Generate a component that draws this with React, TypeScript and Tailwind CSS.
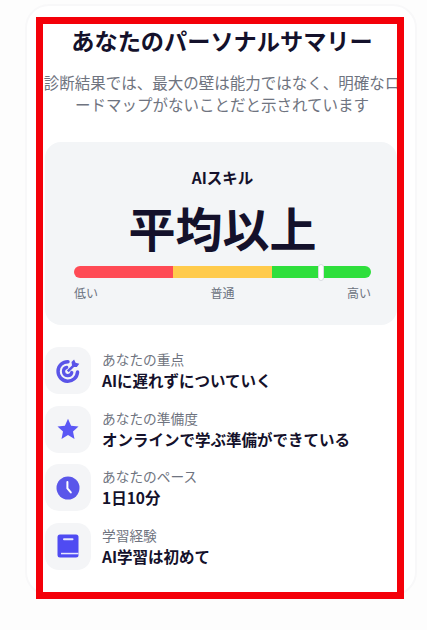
import type { ReactNode } from "react"

function TargetIcon() {
  return (
    <svg viewBox="0 0 24 24" className="h-[26px] w-[26px]" fill="none" stroke="#5a54e8">
      <path d="M12 3.400A9 9 0 1 0 20.800 13" strokeWidth="3.200" strokeLinecap="round" />
      <path d="M10.800 8.600A3.900 3.900 0 1 0 15.500 13.400" strokeWidth="3" strokeLinecap="round" />
      <path d="M11.800 12.400L18.600 5.600" strokeWidth="2.400" />
      <path d="M15.200 3.600L17.600 1.400L19 4.400L22.400 5.400L20.200 8.200L16 8.200Z" fill="#5a54e8" stroke="none" />
    </svg>
  )
}

function StarIcon() {
  return (
    <svg viewBox="0 0 24 24" className="h-[24px] w-[24px]" fill="#5b57f5">
      <path d="M12 1.800l3.100 6.900 7.400.8-5.500 5 1.500 7.400-6.500-3.800-6.500 3.800 1.500-7.400-5.500-5 7.400-.8z" />
    </svg>
  )
}

function ClockIcon() {
  return (
    <svg viewBox="0 0 24 24" className="h-[24px] w-[24px]">
      <circle cx="12" cy="12" r="11.500" fill="#5a56ea" />
      <path d="M11.400 6v6.400l3.400 4" fill="none" stroke="#fff" strokeWidth="2" strokeLinecap="round" strokeLinejoin="round" />
    </svg>
  )
}

function BookIcon() {
  return (
    <svg viewBox="0 0 24 24" className="h-[24px] w-[24px]">
      <rect x="1.500" y="0.500" width="21" height="23" rx="2.500" fill="#4f4bf2" />
      <rect x="7" y="4.300" width="10.500" height="2" rx="1" fill="#e6e6fd" />
      <rect x="5" y="18.800" width="17.500" height="1.500" fill="#e6e6fd" />
    </svg>
  )
}

const rows: { label: string; value: string; icon: ReactNode }[] = [
  { label: "あなたの重点", value: "AIに遅れずについていく", icon: <TargetIcon /> },
  { label: "あなたの準備度", value: "オンラインで学ぶ準備ができている", icon: <StarIcon /> },
  { label: "あなたのペース", value: "1日10分", icon: <ClockIcon /> },
  { label: "学習経験", value: "AI学習は初めて", icon: <BookIcon /> },
]

export default function App() {
  return (
    <div className="relative h-[630px] w-[427px] overflow-hidden bg-[#fdfdfd] pt-[4px] pl-[25px] font-['Noto_Sans_CJK_JP',sans-serif]">
      {/* Card */}
      <div className="h-[592px] w-[392px] rounded-[24px] border-2 border-[#f8f8f9] bg-white pt-[15px] pr-[14px] pl-[16px]">
        <h1 className="text-center text-[23.200px] leading-[38px] font-bold whitespace-nowrap text-[#14112b]">
          あなたのパーソナルサマリー
        </h1>
        <p className="mt-[12px] text-center text-[15.500px] leading-[22px] text-[#6f7480]">
          診断結果では、最大の壁は能力ではなく、明確なロードマップがないことだと示されています
        </p>

        {/* Skill panel */}
        <div className="mt-[27px] mr-[4px] ml-[2px] flex h-[183px] flex-col items-center rounded-[16px] bg-[#f3f5f7] pt-[24px] pr-[26px] pl-[29px]">
          <div className="text-[15.500px] leading-[22px] font-bold text-[#14112b]">AIスキル</div>
          <div className="mt-[9px] text-[47px] leading-[60px] font-bold whitespace-nowrap text-[#14112b]">平均以上</div>
          <div className="relative mt-[9px] flex h-[12px] w-full">
            <div className="flex-1 rounded-l-full bg-[#ff4b55]" />
            <div className="flex-1 bg-[#ffcb4c]" />
            <div className="flex-1 rounded-r-full bg-[#2edf3c]" />
            <div className="absolute top-[-2px] left-[244px] h-[17px] w-[6px] rounded-full border border-[#d9dce1] bg-white" />
          </div>
          <div className="mt-[6px] flex w-full justify-between text-[12px] leading-[18px] text-[#6b7280]">
            <span>低い</span>
            <span>普通</span>
            <span>高い</span>
          </div>
        </div>

        {/* Summary rows */}
        <div className="mt-[22px] ml-[2px] flex flex-col gap-[11.500px]">
          {rows.map((row) => (
            <div key={row.label} className="flex items-center gap-[11px]">
              <div className="flex h-[47px] w-[46px] shrink-0 items-center justify-center rounded-[14px] bg-[#f4f5f7]">
                {row.icon}
              </div>
              <div className="min-w-0">
                <div className="text-[13.700px] leading-[20px] text-[#6f7480]">{row.label}</div>
                <div className="text-[15.500px] leading-[23px] font-bold whitespace-nowrap text-[#14112b]">{row.value}</div>
              </div>
            </div>
          ))}
        </div>
      </div>

      {/* Red annotation frame over the content */}
      <div className="pointer-events-none absolute top-[17px] left-[36px] h-[582px] w-[368px] border-[7px] border-[#f40009]" />
    </div>
  )
}
